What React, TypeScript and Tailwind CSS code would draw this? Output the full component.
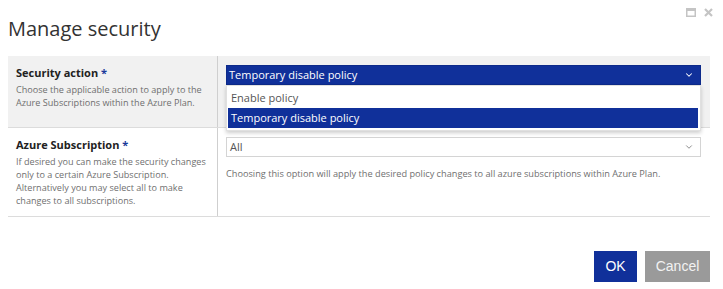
import { ChevronDown } from 'lucide-react'

const Field = ({
  label,
  desc,
  gray,
  children,
}: {
  label: string
  desc: string[]
  gray?: boolean
  children: React.ReactNode
}) => (
  <div className={`flex border-b border-[#dcdcdc] ${gray ? 'bg-[#f1f1f1]' : 'bg-white'}`}>
    <div className="w-[210px] shrink-0 border-r border-[#cfcfcf] pl-2 pr-1 pt-[9px]">
      <p className="text-[11px] font-bold leading-[16px] text-[#222]">
        {label} <span className="text-[#1a3a9a]">*</span>
      </p>
      <div className="mt-[1.5px] text-[9.1px] leading-[13.3px] text-[#6f6f6f]">
        {desc.map((d) => (
          <p key={d} className="whitespace-nowrap">
            {d}
          </p>
        ))}
      </div>
    </div>
    <div className="flex-1 pl-2 pr-[9px] pt-[9px]">{children}</div>
  </div>
)

export default function App() {
  return (
    <div className="relative h-[289px] w-[723px] bg-white font-['Open_Sans',sans-serif]">
      <div className="absolute right-[10px] top-[8px] flex items-center gap-[8px] text-[#c4c4c4]">
        <svg width="10" height="9" viewBox="0 0 10 9">
          <rect x="0.75" y="0.75" width="8.5" height="7.5" fill="none" stroke="currentColor" strokeWidth="1.5" />
          <rect x="0" y="0" width="10" height="3" fill="currentColor" />
        </svg>
        <svg width="9" height="9" viewBox="0 0 9 9">
          <path d="M1 1L8 8M8 1L1 8" stroke="currentColor" strokeWidth="2.2" />
        </svg>
      </div>

      <div className="px-2 pt-[15px]">
        <h1 className="text-[20px] leading-[28px] text-[#333]">Manage security</h1>
      </div>

      <div className="mx-2 mt-[13px] w-[702px]">
        <Field
          gray
          label="Security action"
          desc={['Choose the applicable action to apply to the', 'Azure Subscriptions within the Azure Plan.']}
        >
          <div className="relative h-[62px]">
            <div className="flex h-[20px] items-center justify-between border border-[#0d2a8a] bg-[#10309a] pl-[2px] pr-[6px] text-[11px] text-white">
              <span>Temporary disable policy</span>
              <ChevronDown size={10} strokeWidth={2.5} />
            </div>
            <div className="absolute left-0 right-0 top-[20px] z-10 border border-[#e0e0e0] bg-white py-[2px] pl-[1px] pr-[2px] text-[11px] shadow-[0_2px_4px_rgba(0,0,0,0.2)]">
              <div className="flex h-[20px] items-center pl-[3px] text-[#555]">Enable policy</div>
              <div className="flex h-[20px] items-center bg-[#10309a] pl-[3px] text-white">Temporary disable policy</div>
            </div>
          </div>
        </Field>
        <Field
          label="Azure Subscription"
          desc={[
            'If desired you can make the security changes',
            'only to a certain Azure Subscription.',
            'Alternatively you may select all to make',
            'changes to all subscriptions.',
          ]}
        >
          <div className="h-[79px]">
            <div className="flex h-[20px] items-center justify-between border border-[#d4d4d4] bg-white pl-[3px] pr-[6px] text-[11px] text-[#555]">
              <span>All</span>
              <ChevronDown size={10} strokeWidth={2} className="text-[#777]" />
            </div>
            <p className="mt-[10px] text-[9.2px] leading-[13px] text-[#6f6f6f]">
              Choosing this option will apply the desired policy changes to all azure subscriptions within Azure Plan.
            </p>
          </div>
        </Field>
      </div>

      <div className="absolute bottom-[7px] right-[13px] flex gap-2 font-['Liberation_Sans',Arial,sans-serif] text-[14px]">
        <button className="h-[31px] w-[43px] bg-[#10309a] text-white">OK</button>
        <button className="h-[31px] w-[65px] bg-[#9a9a9a] text-[#f2f2f2]">Cancel</button>
      </div>
    </div>
  )
}
